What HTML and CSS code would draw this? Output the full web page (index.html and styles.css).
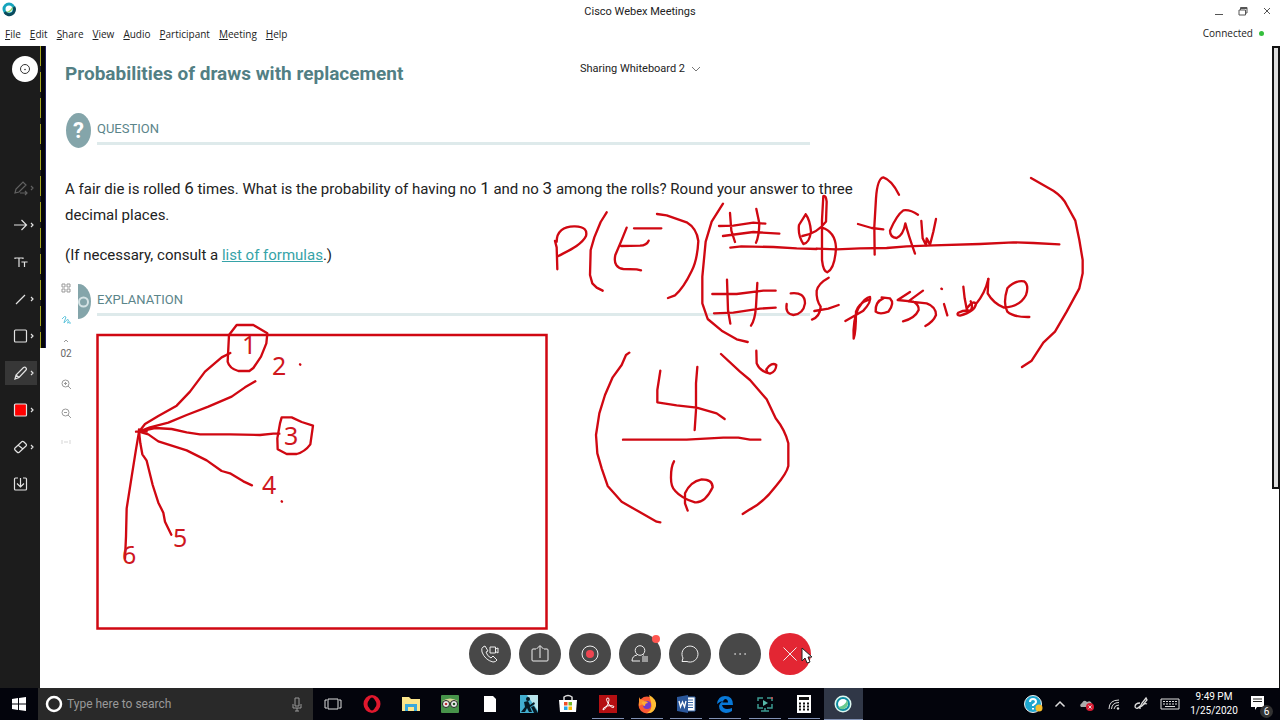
FILE: index.html
```html
<!DOCTYPE html>
<html lang="en">
<head>
<meta charset="utf-8">
<title>Cisco Webex Meetings</title>
<link rel="stylesheet" href="styles.css">
</head>
<body>
<header class="titlebar">
  <svg class="app-logo" viewBox="0 0 16 16"><circle cx="8" cy="8" r="5" fill="none" stroke="#16a4bd" stroke-width="3"/><path d="M3.8 11A5 5 0 0 0 12.8 6" fill="none" stroke="#0b4a5c" stroke-width="3"/><path d="M5 11Q10 10 11.500 5A5 5 0 0 1 5 11" fill="#8ad05c"/></svg>
  <h1 class="window-title">Cisco Webex Meetings</h1>
  <div class="window-buttons">
    <button aria-label="Minimize"><svg viewBox="0 0 10 10"><path d="M1 8.500H9"/></svg></button>
    <button aria-label="Restore"><svg viewBox="0 0 10 10"><path d="M1 4H7.500V9H1ZM2.500 4V1.500H9V7H7.500M2.500 2.500H9"/></svg></button>
    <button aria-label="Close"><svg viewBox="0 0 10 10"><path d="M2 2L8 8M8 2L2 8"/></svg></button>
  </div>
</header>
<nav class="menubar">
  <button><u>F</u>ile</button><button><u>E</u>dit</button><button><u>S</u>hare</button><button><u>V</u>iew</button><button><u>A</u>udio</button><button><u>P</u>articipant</button><button><u>M</u>eeting</button><button><u>H</u>elp</button>
  <span class="status">Connected <i class="status-dot"></i></span>
</nav>
<main class="meeting">
  <aside class="tools">
    <button class="info" aria-label="Meeting info"><svg viewBox="0 0 26 26"><circle cx="13" cy="13" r="4.500" fill="none" stroke="#333"/><circle cx="13" cy="13.500" r=".8" fill="#333"/></svg></button>
    <button class="tool tool-dim" aria-label="Pointer"><svg viewBox="0 0 32 24"><path d="M10 17L11 13L18 6L21 9L14 16ZM15 17H22M20 15L22 17L20 19M26 10L28 12L26 14"/></svg></button>
    <button class="tool" aria-label="Arrow"><svg viewBox="0 0 32 24"><path d="M9 12H21M16.500 7L21.500 12L16.500 17M26 10L28 12L26 14"/></svg></button>
    <button class="tool" aria-label="Text"><svg viewBox="0 0 32 24"><path d="M10 9V8H18V9M14 8V17M17 12.500V12H22V12.500M19.500 12V17"/></svg></button>
    <button class="tool" aria-label="Line"><svg viewBox="0 0 32 24"><path d="M11 17L20 8M26 10L28 12L26 14"/></svg></button>
    <button class="tool" aria-label="Rectangle"><svg viewBox="0 0 32 24"><rect x="9.500" y="6" width="12" height="12" rx="1"/><path d="M26 10L28 12L26 14"/></svg></button>
    <button class="tool tool-active" aria-label="Pen"><svg viewBox="0 0 32 24"><path d="M10 18L11 14L18.500 6.500Q20 5.500 21 7Q22 8 21 9L14 16.500ZM11 14L14 16.500M26 10L28 12L26 14"/></svg></button>
    <button class="tool" aria-label="Color"><svg viewBox="0 0 32 24"><rect x="9.500" y="6" width="12" height="12" rx="1" fill="red"/><path d="M26 10L28 12L26 14"/></svg></button>
    <button class="tool" aria-label="Eraser"><svg viewBox="0 0 32 24"><path d="M10 13L17 6.500Q18 6 19 7L21 9Q22 10 21 11L14 17.500Q13 18 12 17L10 15Q9 14 10 13ZM13 10L18 14M26 10L28 12L26 14"/></svg></button>
    <button class="tool" aria-label="Save"><svg viewBox="0 0 32 24"><path d="M13 6H10.500Q9.500 6 9.500 7V17Q9.500 18 10.500 18H20.500Q21.500 18 21.500 17V7Q21.500 6 20.500 6H18M15.500 6V14.500M12 11.500L15.500 15L19 11.500"/></svg></button>
  </aside>
  <section class="board">
    <div class="share-edge"></div>
    <article class="lesson">
      <h2>Probabilities of draws with replacement</h2>
      <div class="section-head">
        <span class="badge">?</span><h3>QUESTION</h3>
      </div>
      <p>A fair die is rolled <b>6</b> times. What is the probability of having no <b>1</b> and no <b>3</b> among the rolls? Round your answer to three<br>decimal places.</p>
      <p>(If necessary, consult a <a href="#formulas">list of formulas</a>.)</p>
      <div class="section-head section-last">
        <span class="badge"><svg viewBox="0 0 25 35"><circle cx="17.500" cy="18" r="4.500" fill="none" stroke="#d5e3e5" stroke-width="2"/></svg></span><h3>EXPLANATION</h3>
      </div>
    </article>
    <div class="page-tools">
      <button aria-label="Thumbnails"><svg viewBox="0 0 12 12"><path d="M2 2h3v3h-3zM7 2h3v3h-3zM2 7h3v3h-3zM7 7h3v3h-3z"/></svg></button>
      <button class="scribble" aria-label="Annotate"><svg viewBox="0 0 12 12"><path d="M2 5Q5 1 6 3Q4 8 4 9Q8 4 8.500 6Q7 10 8 9Q10 7 10 8V10"/></svg></button>
      <button class="page-up" aria-label="Previous page"><svg viewBox="0 0 12 12"><path d="M4 7L6 5L8 7"/></svg></button>
      <span class="page-no">02</span>
      <button aria-label="Zoom in"><svg viewBox="0 0 12 12"><circle cx="5.500" cy="5.500" r="3.500"/><path d="M8 8L11 11M4 5.500H7M5.500 4V7"/></svg></button>
      <button aria-label="Zoom out"><svg viewBox="0 0 12 12"><circle cx="5.500" cy="5.500" r="3.500"/><path d="M8 8L11 11M4 5.500H7"/></svg></button>
      <button class="fit" aria-label="Fit width"><svg viewBox="0 0 12 12"><path d="M2 4V8M10 4V8M4 6H8"/></svg></button>
    </div>
    <svg class="ink" viewBox="40 46 1240 642" preserveAspectRatio="xMinYMin meet">
      <path class="ink-frame" d="M97.500 335H546.500V628.500H97.500Z"/>
      <g transform="translate(540 160) scale(.33333)">
        <path d="M45 243L50 262L52 328M50 245C50 215 70 198 105 199C135 200 142 212 138 228C125 255 85 272 55 288"/>
        <path d="M200 157L182 186L163 232L152 270L150 345L157 370L170 383L188 392"/>
        <path d="M260 203L243 245L226 285C220 312 232 325 250 327L290 328L303 331M243 258L300 257Q320 256 326 242M282 205H364"/>
        <path d="M351 162L380 166L440 187Q470 205 475 243Q472 300 455 333Q430 385 405 406L384 414"/>
        <path d="M549 131L515 185L497 245L487 350L487 430L503 477L545 512L590 538L623 546"/>
        <path d="M570 159L574 212L585 246M649 147L658 190Q657 230 648 248M537 198L580 197L640 188L676 191M549 228L640 216L718 221"/>
        <path d="M571 263L604 259L700 261L770 265L830 267"/>
        <path d="M797 163L777 195Q773 225 790 252Q808 250 813 215Q810 180 797 163M787 228Q830 222 858 185L860 125Q858 105 850 108L846 180L846 300Q850 335 862 337Q885 325 888 262Q885 215 846 203"/>
        <path d="M561 359L564 450L571 491M652 369L648 440Q645 480 633 497M517 402L590 402L670 392L707 392M522 460L580 458L660 446L707 443"/>
        <path d="M752 400Q795 395 795 430Q790 462 760 465Q735 462 740 432"/>
      </g>
      <g transform="translate(800 160) scale(.33333)">
        <path d="M50 266L110 268L180 265L260 264L320 259L400 256L540 252L640 247L700 249L778 253"/>
        <path d="M297 104Q275 60 250 52Q232 55 228 115L223 200L224 284M174 192L215 204L250 208"/>
        <path d="M354 164Q330 148 310 151Q290 165 270 212Q270 232 290 234Q310 225 316 190Q325 225 345 281"/>
        <path d="M364 183L368 235L378 256L380 235L390 254L400 215L408 177"/>
        <path d="M86 353Q55 370 50 392Q48 420 62 440Q60 470 36 479M43 453L85 446L116 435"/>
        <path d="M136 483L190 452Q215 425 210 411Q195 412 175 445Q158 480 161 536Q168 515 168 455Q175 430 205 420"/>
        <path d="M250 415Q225 425 227 455Q240 465 265 455Q285 430 270 415L245 412"/>
        <path d="M330 396L293 420L340 425Q358 435 356 450Q345 475 309 484M369 392L325 424L380 430Q408 440 408 465Q400 485 376 498"/>
        <path d="M432 432L442 466M424 386L426 387"/>
        <path d="M490 380L494 415L500 446Q520 418 528 432Q524 455 480 467Q468 465 475 458Q490 450 512 452Q520 440 512 424M528 432Q555 400 565 357"/>
        <path d="M565 357L563 400Q580 430 612 443Q660 440 678 405Q688 375 672 364Q645 360 622 385Q608 430 622 455Q640 472 688 471"/>
        <path d="M693 54L760 92Q790 112 800 135L826 182L838 240L848 300L848 340L838 385L800 455L765 515L730 548L695 602L666 621"/>
      </g>
      <g transform="translate(580 340) scale(.33333)">
        <path d="M148 38L138 45L125 75L98 112L75 165L58 220L48 285L52 340L65 385L83 438L125 485L175 514L230 545L241 547"/>
        <path d="M241 92L232 150V187L290 196L350 203L410 220L434 237M352 81L348 130V210L344 270"/>
        <path d="M129 299H320L430 293H475L510 299H541"/>
        <path d="M282 364Q273 380 273 410Q272 440 285 452Q305 475 345 487Q375 490 398 442Q398 418 365 418Q330 425 315 460V490L323 512"/>
        <path d="M423 42L480 95L510 120L560 178L587 235Q615 270 625 310V378Q620 400 588 438Q550 488 510 508L488 522"/>
        <path d="M529 32L530 70Q540 95 570 101Q588 95 589 75Q575 65 559 88L562 98"/>
      </g>
      <g transform="translate(90 320) scale(.33333)">
        <path d="M147 335L165 312L205 288L260 257L300 215L345 155L395 112L421 99"/>
        <path d="M147 335L180 322L235 308L290 285L355 260L425 230L465 202L496 184"/>
        <path d="M147 335L195 324L245 327L290 337L330 343H420L510 345L550 341H568"/>
        <path d="M147 335L175 343L205 364L290 391L350 421L395 453L420 460L460 484L486 496"/>
        <path d="M147 335L151 370L157 403L170 422L188 495L205 548L220 578L225 605L244 644"/>
        <path d="M147 335L138 388L125 470L110 565L108 650L105 715M138 335H170M147 328V345"/>
        <path d="M440 15H490L532 40L529 70L513 110L490 144L478 153H445Q418 145 413 125L417 45Z"/>
        <path d="M575 292H605L635 306L669 317L661 373Q645 395 620 402H590L563 388L562 355L570 310Z"/>
        <path d="M630 133L631 134M575 544L576 545"/>
      </g>
      <g class="ink-digits">
        <text x="242" y="354">1</text><text x="272" y="375">2</text><text x="284" y="445">3</text>
        <text x="262" y="494">4</text><text x="173" y="547">5</text><text x="122" y="564">6</text>
      </g>
    </svg>
    <div class="scrollbar"><div class="scroll-thumb"></div></div>
  </section>
  <button class="share-title">Sharing Whiteboard 2 <svg viewBox="0 0 10 6"><path d="M1 1L5 5L9 1"/></svg></button>
  <div class="controls">
    <button aria-label="Audio and video"><svg viewBox="0 0 42 42"><path d="M14 14Q12 15 13 19Q16 27 24 29Q27 29 28 27L24 23L22 25Q18 23 17 19L19 18L16 13ZM21 14H26.500V20H21ZM26.500 16L29 15V20L26.500 18.500"/></svg></button>
    <button aria-label="Share"><svg viewBox="0 0 42 42"><path d="M17 16H14Q13 16 13 17V27Q13 28 14 28H28Q29 28 29 27V17Q29 16 28 16H25M21 25V13M17.500 16L21 12.500L24.500 16"/></svg></button>
    <button aria-label="Record"><svg viewBox="0 0 42 42"><circle cx="21" cy="21" r="8"/><circle cx="21" cy="21" r="4" fill="#f04550" stroke="none"/></svg></button>
    <button aria-label="Participants"><svg viewBox="0 0 42 42"><circle cx="21" cy="17.500" r="4.800"/><path d="M18 22Q13 23 13 28H21M24 22H25M23 24H29M23 26H29M23 28H29"/></svg><i class="notice"></i></button>
    <button aria-label="Chat"><svg viewBox="0 0 42 42"><path d="M13 28.500L14 25A8 8 0 1 1 18 28.500Z"/></svg></button>
    <button aria-label="More"><svg viewBox="0 0 42 42"><path d="M16 21H16.200M21 21H21.200M26 21H26.200" stroke-width="1.500" stroke-linecap="round"/></svg></button>
    <button class="leave" aria-label="Leave meeting"><svg viewBox="0 0 42 42"><path d="M14.500 14.500L27.500 27.500M27.500 14.500L14.500 27.500"/></svg><svg class="cursor" viewBox="0 0 12 18"><path d="M1 1V14L4 11L6 16L9 15L7 10H11Z"/></svg></button>
  </div>
</main>
<footer class="taskbar">
  <button class="start" aria-label="Start"><svg viewBox="0 0 14 14"><path fill="#fff" d="M0 2L6 1V6.500H0ZM7 1L14 0V6.500H7ZM0 7.500H6V13L0 12ZM7 7.500H14V14L7 13Z"/></svg></button>
  <label class="search">
    <svg viewBox="0 0 18 18"><circle cx="9" cy="9" r="7" fill="none" stroke="#fff" stroke-width="2.500"/></svg>
    <input type="text" placeholder="Type here to search" aria-label="Search">
    <svg class="mic" viewBox="0 0 12 16"><path d="M4 2H8V10H4ZM2 8V12H10V8M6 12V15M4 15H8" fill="none" stroke="#999"/></svg>
  </label>
  <div class="apps">
    <button aria-label="Task view"><svg viewBox="0 0 20 20"><path d="M5 5H15V15H5ZM4 6H2V14H4M16 6H18V14H16" fill="none" stroke="#ddd"/></svg></button>
    <button aria-label="Opera"><svg viewBox="0 0 20 20"><ellipse cx="10" cy="10" rx="6.500" ry="7" fill="none" stroke="#e0182d" stroke-width="4"/><ellipse cx="10" cy="10" rx="3.500" ry="6.500" fill="#03040c"/></svg></button>
    <button aria-label="File Explorer"><svg viewBox="0 0 20 20"><path d="M1 3H8L10 5H19V17H1Z" fill="#fbe58b"/><path d="M4 17V10H16V17H13V13H7V17Z" fill="#38a8dc"/></svg></button>
    <button aria-label="TripAdvisor"><svg viewBox="0 0 20 20"><rect x="1" y="1" width="18" height="18" rx="1" fill="#47934a"/><path d="M2 7Q10 2 18 7L15 8H5Z" fill="#d9d69a"/><circle cx="6" cy="10" r="3.500" fill="#eee" stroke="#222"/><circle cx="14" cy="10" r="3.500" fill="#eee" stroke="#222"/><circle cx="6" cy="10" r="1.300" fill="#b33"/><circle cx="14" cy="10" r="1.300" fill="#252"/></svg></button>
    <button aria-label="Document"><svg viewBox="0 0 20 20"><path d="M4 2H13L16 5V18H4Z" fill="#fff"/></svg></button>
    <button aria-label="Kindle"><svg viewBox="0 0 20 20"><rect x="1" y="1" width="18" height="18" fill="#42aed0"/><path d="M8 1H19V17Z" fill="#b8e5ec"/><circle cx="9" cy="5" r="2" fill="#061923"/><path d="M5 8L9 7L11 11L15 8L16 10L11 13L13 18H10L8 14L6 18H2L6 13Z" fill="#061923"/><path d="M12 13L15 12L19 19H15Z" fill="#061923"/></svg></button>
    <button aria-label="Store"><svg viewBox="0 0 20 20"><path d="M1 6H19L18 18H2Z" fill="#fff"/><path d="M6 6V3Q10 0 14 3V6" fill="none" stroke="#ddd" stroke-width="1.500"/><path d="M6 8H9.500V11.500H6Z" fill="#f05028"/><path d="M10.500 8H14V11.500H10.500Z" fill="#78b928"/><path d="M6 12.500H9.500V16H6Z" fill="#24a6e8"/><path d="M10.500 12.500H14V16H10.500Z" fill="#fbb900"/></svg></button>
    <button class="running" aria-label="Acrobat"><svg viewBox="0 0 20 20"><rect x="1" y="1" width="18" height="18" fill="#b40f12"/><path d="M10 4Q7 4 10 9Q14 15 16 13Q16 11 9 12Q4 14 5 16Q7 16 10 10Q12 4 10 4" fill="none" stroke="#fff"/></svg></button>
    <button class="running" aria-label="Firefox"><svg viewBox="0 0 20 20"><circle cx="10" cy="11" r="8.500" fill="#fa5934"/><path d="M12 1Q20 5 19 12Q17 20 10 19Q16 16 14 8Z" fill="#ffbd34"/><path d="M2 3Q3 6 6 6L9 8L6 10L2 12Z" fill="#ff932c"/><circle cx="10" cy="11" r="4" fill="#713bcc"/><path d="M5 8Q10 6 11 9Q8 9 8 12Q5 12 5 8" fill="#ffad33"/></svg></button>
    <button class="running" aria-label="Word"><svg viewBox="0 0 20 20"><path d="M10 3H19V17H10Z" fill="#fff" stroke="#3767a8"/><path d="M12 6H17M12 8.500H17M12 11H17M12 13.500H17" stroke="#3767a8"/><path d="M1 3L12 1V19L1 17Z" fill="#2b579a"/><path d="M3 7L4.500 13L6.500 8L8.500 13L10 7" fill="none" stroke="#fff" stroke-width="1.300"/></svg></button>
    <button class="running" aria-label="Edge"><svg viewBox="0 0 20 20"><path d="M2 10Q3 2 10 2Q18 2 18 11H7Q8 15 12 15Q15 15 17 14V17Q14 19 11 19Q4 18 4 12Q5 8 9 7Q5 7 2 10ZM7.500 8.500H13Q13 5 10 5Q8 6 7.500 8.500Z" fill="#0878d7"/></svg></button>
    <button class="running" aria-label="Screen recorder"><svg viewBox="0 0 20 20"><path d="M3 7V4H8M12 4H17V7M3 10V14H8M12 14H17V10M10 14V17M6 17H14" fill="none" stroke="#3c9a91" stroke-width="1.500"/><path d="M8 6L13 9L8 12Z" fill="#57b9aa"/><circle cx="17" cy="4" r="1" fill="#d44"/></svg></button>
    <button class="running" aria-label="Calculator"><svg viewBox="0 0 20 20"><rect x="3" y="1" width="14" height="18" fill="#fff"/><path d="M5 3H15V6H5Z" fill="#111"/><path d="M5 9.500H15M5 12.500H15M5 15.500H15" stroke="#111" stroke-width="2" stroke-dasharray="2 2"/></svg></button>
    <button class="running current" aria-label="Webex"><svg viewBox="0 0 20 20"><circle cx="10" cy="10" r="8.500" fill="#ddf7ef"/><circle cx="10" cy="10" r="7" fill="#0d8ba0"/><circle cx="10" cy="10" r="5" fill="#fff"/><path d="M5 13Q12 12 14 6Q17 12 11 15Q7 16 5 13" fill="#69ca8e"/></svg></button>
  </div>
  <div class="tray">
    <button aria-label="Help"><svg viewBox="0 0 20 20"><circle cx="10" cy="10" r="8.500" fill="#1ea6cf" stroke="#eee"/><path d="M7 8Q7 5 10 5Q13 5 13 8Q13 9 10 11V12M10 14V15.500" fill="none" stroke="#fff" stroke-width="2"/><circle cx="16" cy="14" r="3.500" fill="#f6bd2b" stroke="none"/></svg></button>
    <button aria-label="Show hidden icons"><svg viewBox="0 0 20 20"><path d="M5.500 12.500L10 8L14.500 12.500" stroke-width="1.500"/></svg></button>
    <button aria-label="Cloud sync"><svg viewBox="0 0 20 20"><path d="M4 13Q2 11 5 9Q7 5 10 8Q14 6 15 10V13Z" fill="#aaa" stroke="none"/><circle cx="13" cy="13" r="4" fill="#d91c33" stroke="none"/><path d="M11.500 11.500L14.500 14.500M14.500 11.500L11.500 14.500"/></svg></button>
    <button aria-label="Network"><svg viewBox="0 0 20 20"><path d="M5 15Q5 6 15 6M7.500 15Q8 8.500 15 8.500M10 15Q10.500 11 15 11"/><circle cx="14" cy="14.500" r="1.200" fill="#ddd" stroke="none"/></svg></button>
    <button aria-label="Pen workspace"><svg viewBox="0 0 20 20"><path d="M9 13L11 9L15 4L16 6L11 12ZM9 9Q4 9 4 13Q6 16 9 12M9 12V15M12 11Q14 9 16 10" stroke-width="1.300"/></svg></button>
    <button class="keyboard" aria-label="Keyboard"><svg viewBox="0 0 20 20"><path d="M1 5H19V15H1Z"/><path d="M3 7.500H17M3 10H17" stroke-dasharray="2 1"/><path d="M5 12.500H15"/></svg></button>
    <button class="clock"><span>9:49 PM</span><span>1/25/2020</span></button>
    <button class="alerts" aria-label="Notifications"><svg viewBox="0 0 20 20"><path d="M3 2H16V13H9L7 16V13H3Z" fill="#fff" stroke="none"/><path d="M5 5H14M5 7.500H14" stroke="#222"/></svg><span class="count">6</span></button>
  </div>
</footer>
</body>
</html>
```
FILE: styles.css
```css
* { box-sizing: border-box; }
body {
  margin: 0;
  min-height: 100vh;
  display: grid;
  grid-template-rows: 22px 24px 1fr 32px;
  background: #fff;
  color: #222;
  font-family: Roboto, "Noto Sans", sans-serif;
  font-size: 11px;
  overflow-x: hidden;
}
button {
  border: 0;
  padding: 0;
  background: none;
  color: inherit;
  font: inherit;
}
svg { display: block; }

.titlebar {
  display: grid;
  grid-template-columns: 1fr auto 1fr;
  align-items: center;
}
.app-logo { width: 16px; height: 16px; margin: 0 0 4px 1px; }
.window-title { margin: 0; font-size: 11px; font-weight: 400; }
.window-buttons { display: flex; justify-content: flex-end; gap: 14px; padding-right: 8px; }
.window-buttons svg { width: 10px; height: 10px; fill: none; stroke: #555; }

.menubar {
  display: flex;
  align-items: center;
  gap: 9px;
  padding: 0 16px 0 5px;
  font-family: "Open Sans", "Noto Sans", sans-serif;
  font-size: 10px;
}
.menubar u { text-underline-offset: 1px; }
.status {
  display: flex;
  align-items: center;
  gap: 6px;
  margin-left: auto;
  padding-bottom: 2px;
}
.status-dot { width: 5px; height: 5px; border-radius: 50%; background: #35bf3d; }

.meeting { position: relative; display: flex; }
.tools {
  width: 40px;
  flex: none;
  display: flex;
  flex-direction: column;
  background: #1c1c1c;
}
.info {
  width: 26px;
  height: 26px;
  margin: 10px 0 87px 12px;
  border-radius: 50%;
  background: #fff;
}
.tool { display: grid; place-items: center; height: 37px; margin: 0 3px 0 5px; }
.tool svg { width: 32px; height: 24px; fill: none; stroke: #e2e2e2; stroke-width: 1.2; }
.tool-dim { opacity: .35; }
.tool-active svg { background: #373737; }

.board { position: relative; flex: 1; }
.share-edge {
  position: absolute;
  top: 0;
  left: 0;
  width: 6px;
  height: 302px;
  background: repeating-linear-gradient(#a5a520 0 20px, #1c1c1c 20px 26px) 0 0 / 1px 100% no-repeat #05050a;
  border-right: 1px solid #20205c;
}
.lesson { padding: 14px 0 0 25px; font-size: 15px; line-height: 28px; }
.lesson h2 { margin: 0; color: #527f84; font-size: 19px; line-height: 28px; }
.section-head {
  display: flex;
  align-items: center;
  gap: 6px;
  width: 745px;
  height: 35px;
  margin: 25px 0 28px;
}
.section-last { margin: 16px 0 0; }
.badge {
  display: grid;
  place-items: center;
  width: 25px;
  height: 35px;
  margin-left: 1px;
  border-radius: 50%;
  background: #84a5aa;
  color: #fff;
  font-size: 22px;
  font-weight: 700;
}
.badge svg { width: 25px; height: 35px; }
.section-head h3 {
  flex: 1;
  margin: 0;
  border-bottom: 3px solid #deeaeb;
  color: #5b858a;
  font-size: 13px;
  font-weight: 400;
  line-height: 26px;
}
.lesson p { margin: 0 0 14px; line-height: 26px; }
.lesson b { font-weight: 400; font-size: 17px; line-height: 20px; }
.lesson a { color: #36a3a8; }

.page-tools {
  position: absolute;
  top: 232px;
  left: 14px;
  width: 24px;
  display: flex;
  flex-direction: column;
  align-items: center;
  gap: 17px;
  padding-top: 4px;
  background: #fff;
}
.page-tools svg { width: 12px; height: 12px; fill: none; stroke: #999; }
.page-tools .scribble { margin-top: 3px; }
.page-tools .scribble svg { stroke: #62c6dd; }
.page-tools .page-up { margin: -8px 0 -17px; }
.page-tools .fit { opacity: .4; }
.page-no { color: #666; font-size: 10px; line-height: 14px; }
.ink {
  position: absolute;
  inset: 0;
  width: 100%;
  height: 100%;
  fill: none;
  stroke: #d00812;
  stroke-width: 7;
  stroke-linecap: round;
  stroke-linejoin: round;
  pointer-events: none;
}
.ink-frame { stroke-width: 2.5; stroke-linejoin: miter; }
.ink-digits { fill: #cf1720; stroke: none; font-family: "Noto Sans", sans-serif; font-size: 25px; }
.scrollbar {
  position: absolute;
  top: 0;
  right: 0;
  bottom: 0;
  width: 8px;
  border-right: 1px solid #111;
}
.scroll-thumb { height: 443px; border: 2px solid #111; border-right-width: 1px; background: #ddd; }

.share-title {
  position: absolute;
  top: 14px;
  left: 580px;
  display: flex;
  align-items: center;
  gap: 6px;
  line-height: 18px;
}
.share-title svg { width: 10px; height: 6px; fill: none; stroke: #777; }
.controls {
  position: absolute;
  right: 0;
  bottom: 13px;
  left: 0;
  display: flex;
  justify-content: center;
  gap: 8px;
}
.controls button { position: relative; width: 42px; height: 42px; border-radius: 50%; background: #484848; }
.controls svg { width: 42px; height: 42px; fill: none; stroke: #eee; }
.controls .leave { background: #e32633; }
.notice { position: absolute; top: 2px; right: 1px; width: 8px; height: 8px; border-radius: 50%; background: #ff5650; }
.controls .cursor { position: absolute; top: 14px; left: 32px; width: 12px; height: 18px; fill: #fff; stroke: #222; }

.taskbar { display: flex; background: #03040c; color: #fff; }
.start { display: grid; place-items: center; width: 38px; }
.start svg { width: 14px; height: 14px; }
.search { display: flex; align-items: center; gap: 4px; width: 275px; padding: 0 10px 0 7px; background: #292929; }
.search svg { width: 18px; height: 18px; }
.search .mic { width: 12px; height: 16px; }
.search input {
  flex: 1;
  min-width: 0;
  padding: 0;
  border: 0;
  outline: 0;
  background: none;
  color: #fff;
  font: 12px Roboto, "Noto Sans", sans-serif;
}
.search input::placeholder { color: #999; opacity: 1; }
.apps { display: flex; width: 550px; }
.apps button { flex: 1; display: grid; place-items: center; border-bottom: 1px solid transparent; }
.apps svg { width: 20px; height: 20px; }
.apps .running { background: linear-gradient(#8292b5, #8292b5) center bottom / 32px 1px no-repeat; }
.apps .current { background: #303747; border-color: #8292b5; }
.tray { display: flex; align-items: center; margin-left: auto; padding-right: 12px; gap: 7px; }
.tray svg { width: 20px; height: 20px; fill: none; stroke: #ddd; }
.tray .keyboard svg { width: 24px; }
.clock { display: grid; width: 50px; font-size: 10px; line-height: 14px; text-align: center; }
.alerts { position: relative; margin-left: 2px; }
.count {
  position: absolute;
  right: -5px;
  bottom: -4px;
  width: 13px;
  height: 13px;
  border-radius: 50%;
  background: #333;
  font-size: 10px;
  line-height: 13px;
}
```
